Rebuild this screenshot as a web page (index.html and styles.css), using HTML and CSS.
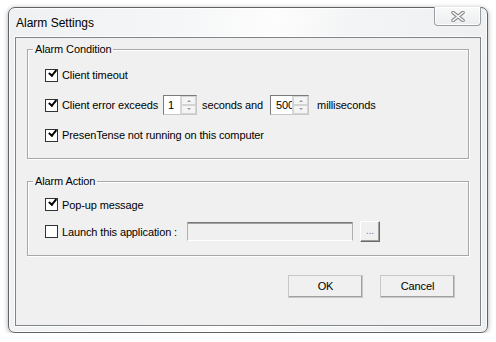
FILE: index.html
```html
<!DOCTYPE html>
<html>

<head>
    <title>Alarm Settings</title>
    <link rel="stylesheet" href="styles.css">
</head>

<body>
    <div class="window">
        <div class="titlebar">
            <span class="title">Alarm Settings</span>
            <div class="close-btn">
                <svg width="14" height="11" viewBox="0 0 14 11">
                    <path d="M2 1.5 L12 9.5 M12 1.5 L2 9.5" stroke="#8c8c8c" stroke-width="3.6" stroke-linecap="round" fill="none"/>
                    <path d="M2 1.5 L12 9.5 M12 1.5 L2 9.5" stroke="#fbfbfb" stroke-width="1.6" stroke-linecap="round" fill="none"/>
                </svg>
            </div>
        </div>

        <div class="client">
            <fieldset class="group group-condition">
                <legend>Alarm Condition</legend>
                <div class="row">
                    <span class="check checked"></span>
                    <span>Client timeout</span>
                </div>
                <div class="row">
                    <span class="check checked"></span>
                    <span>Client error exceeds</span>
                    <div class="spin spin-sec">
                        <span class="spin-value">1</span>
                        <span class="spin-arrows"><i class="up"></i><i class="down"></i></span>
                    </div>
                    <span>seconds and</span>
                    <div class="spin spin-ms">
                        <span class="spin-value">500</span>
                        <span class="spin-arrows"><i class="up"></i><i class="down"></i></span>
                    </div>
                    <span>milliseconds</span>
                </div>
                <div class="row">
                    <span class="check checked"></span>
                    <span>PresenTense not running on this computer</span>
                </div>
            </fieldset>

            <fieldset class="group group-action">
                <legend>Alarm Action</legend>
                <div class="row">
                    <span class="check checked"></span>
                    <span>Pop-up message</span>
                </div>
                <div class="row">
                    <span class="check"></span>
                    <span>Launch this application :</span>
                    <div class="path-box"></div>
                    <div class="browse-btn">...</div>
                </div>
            </fieldset>

            <div class="buttons">
                <div class="btn">OK</div>
                <div class="btn">Cancel</div>
            </div>
        </div>
    </div>
</body>

</html>
```

FILE: styles.css
```css
/* Windows 7 style dialog */
body {
    background-color: #ffffff;
    font-family: "Liberation Sans", Arial, sans-serif;
    font-size: 11px;
    letter-spacing: -0.12px;
    color: #000000;
    margin: 0;
    padding: 0;
}

.window {
    margin: 7px 0 0 8px;
    width: 480px;
    height: 326px;
    box-sizing: border-box;
    border: 1px solid #5f6366;
    border-radius: 7px;
    background: linear-gradient(100deg, #eef0f2 0%, #f6f7f8 35%, #fdfdfd 50%, #f3f4f5 65%, #eceef0 100%);
    box-shadow: 0 1px 5px rgba(0, 0, 0, 0.35), inset 0 0 0 1px rgba(255, 255, 255, 0.8);
    display: flex;
    flex-direction: column;
}

.titlebar {
    height: 29px;
    display: flex;
    justify-content: space-between;
    align-items: flex-start;
    padding: 0 6px 0 7px;
}

.title {
    font-size: 12px;
    letter-spacing: 0;
    margin-top: 8px;
}

.close-btn {
    width: 45px;
    height: 18px;
    margin-top: -1px;
    border: 1px solid #9a9ea2;
    border-top: none;
    border-radius: 0 0 4px 4px;
    background: linear-gradient(#f9f9f9, #eceef0);
    box-shadow: inset 0 0 0 1px rgba(255, 255, 255, 0.9);
    display: flex;
    align-items: center;
    justify-content: center;
}

.client {
    flex: 1;
    margin: 0 6px 6px 6px;
    border: 1px solid #808488;
    box-shadow: 0 0 0 1px rgba(255, 255, 255, 0.85);
    background-color: #f0f0f0;
    padding: 4px 11px 0 11px;
    display: flex;
    flex-direction: column;
}

.group {
    margin: 0;
    padding: 0 5px 0 5px;
    border: 1px solid #a8a8a8;
    box-shadow: inset 1px 1px 0 #ffffff, 1px 1px 0 #ffffff;
}

.group legend {
    padding: 0 2px;
    line-height: 14px;
}

.group-condition {
    padding-top: 4px;
    padding-bottom: 8px;
}

.group-condition .row {
    height: 30px;
}

.group-action {
    margin-top: 15px;
    padding-top: 3px;
    padding-bottom: 10px;
}

.group-action .row {
    height: 27px;
}

.row {
    display: flex;
    align-items: center;
    padding-left: 12px;
}

.check {
    width: 13px;
    height: 13px;
    box-sizing: border-box;
    border: 1px solid #333333;
    background-color: #ffffff;
    margin-right: 4px;
    flex-shrink: 0;
    position: relative;
}

.check.checked::after {
    content: "";
    position: absolute;
    left: 1px;
    top: -1px;
    width: 3px;
    height: 6px;
    border: solid #000000;
    border-width: 0 2px 2px 0;
    transform: rotate(40deg);
    transform-origin: 100% 100%;
}

.spin {
    height: 20px;
    box-sizing: border-box;
    border: 1px solid;
    border-color: #7a7a7a #c8c8c8 #c8c8c8 #7a7a7a;
    background-color: #ffffff;
    display: flex;
    align-items: stretch;
}

.spin-sec {
    width: 34px;
    margin: 0 5px 0 5px;
}

.spin-ms {
    width: 39px;
    margin: 0 8px 0 7px;
}

.spin-value {
    flex: 1;
    padding-left: 4px;
    line-height: 18px;
    overflow: hidden;
    white-space: nowrap;
}

.spin-ms .spin-value {
    flex: none;
    width: 21px;
    box-sizing: border-box;
    padding-left: 5px;
}

.spin-arrows {
    width: 15px;
    display: flex;
    flex-direction: column;
    border-left: 1px solid #d8d8d8;
}

.spin-arrows i {
    flex: 1;
    background-color: #f4f4f4;
    border: 1px solid #d4d4d4;
    position: relative;
}

.spin-arrows i::after {
    content: "";
    position: absolute;
    left: 5px;
    top: 3px;
    border-left: 2px solid transparent;
    border-right: 2px solid transparent;
}

.spin-arrows .up::after {
    border-bottom: 2px solid #9a9a9a;
}

.spin-arrows .down::after {
    top: 2px;
    border-top: 2px solid #9a9a9a;
}

.path-box {
    width: 166px;
    height: 19px;
    box-sizing: border-box;
    margin-left: 10px;
    border: 1px solid;
    border-color: #7a7a7a #b0b0b0 #ffffff #b0b0b0;
    box-shadow: inset 0 1px 0 #a0a0a0;
    background-color: #f0f0f0;
}

.browse-btn {
    width: 20px;
    height: 21px;
    box-sizing: border-box;
    margin-left: 7px;
    border: 1px solid;
    border-color: #ffffff #6a6a6a #6a6a6a #ffffff;
    box-shadow: inset -1px -1px 0 #a0a0a0;
    color: #808080;
    text-align: center;
    line-height: 17px;
    font-size: 10px;
}

.buttons {
    display: flex;
    justify-content: flex-end;
    gap: 17px;
    margin-top: 19px;
    padding-right: 14px;
}

.btn {
    width: 75px;
    height: 23px;
    box-sizing: border-box;
    border: 1px solid;
    border-color: #ffffff #696969 #696969 #ffffff;
    box-shadow: inset -1px -1px 0 #a0a0a0;
    outline: 1px solid #c8c8c8;
    outline-offset: -1px;
    background-color: #f0f0f0;
    text-align: center;
    line-height: 20px;
}
```
